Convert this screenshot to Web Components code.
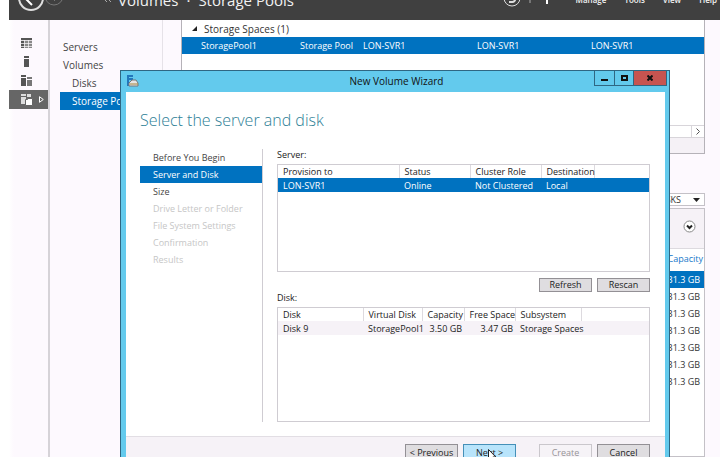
<!DOCTYPE html>
<html lang="en">
<head>
<meta charset="utf-8">
<title>New Volume Wizard</title>
<style>
    body {
        margin: 0;
        background: #ffffff;
        font-family: "Open Sans", "Noto Sans", sans-serif;
        font-size: 9px;
        color: #333333;
    }
</style>
</head>
<body>

<server-manager>
    <console-header slot="header"></console-header>

    <rail-button slot="rail" label="Dashboard">
        <svg width="13" height="12" viewBox="0 0 13 12"><path fill="#888" d="M1 1h11v10H1z"/><path fill="#555" d="M1 1h11v2H1zM1 4h3v7H1z"/><path stroke="#fdf9fe" d="M1 3.500h11M4.500 3v8M8.500 3v8M1 6.500h11M1 9.500h11" stroke-opacity=".7"/></svg>
    </rail-button>
    <rail-button slot="rail" label="Local server">
        <svg width="13" height="12" viewBox="0 0 13 12"><path fill="#555" d="M4 0h5v2H4zM4 3h5v8H4z"/></svg>
    </rail-button>
    <rail-button slot="rail" label="All servers">
        <svg width="13" height="12" viewBox="0 0 13 12"><path fill="#555" d="M1 0h5v2H1zM1 3h5v8H1z"/><path fill="#777" d="M7 2h5v2H7zM7 5h5v6H7z"/></svg>
    </rail-button>
    <rail-button slot="rail" label="File and storage services" selected>
        <svg width="13" height="12" viewBox="0 0 13 12"><path fill="#ddd" d="M1 0h5v2H1zM1 3h5v7H1zM7 0h4v3H7z"/><path fill="#fff" stroke="#666" d="M5.500 5.500h2v-1h5v7h-7z"/></svg>
    </rail-button>

    <nav-item slot="nav">Servers</nav-item>
    <nav-item slot="nav">Volumes</nav-item>
    <nav-item slot="nav" sub>Disks</nav-item>
    <nav-item slot="nav" sub selected>Storage Pools</nav-item>

    <pool-list></pool-list>
    <disk-list></disk-list>
</server-manager>

<wizard-window caption="New Volume Wizard" heading="Select the server and disk">
    <wizard-step slot="steps">Before You Begin</wizard-step>
    <wizard-step slot="steps" selected>Server and Disk</wizard-step>
    <wizard-step slot="steps">Size</wizard-step>
    <wizard-step slot="steps" disabled>Drive Letter or Folder</wizard-step>
    <wizard-step slot="steps" disabled>File System Settings</wizard-step>
    <wizard-step slot="steps" disabled>Confirmation</wizard-step>
    <wizard-step slot="steps" disabled>Results</wizard-step>

    <data-grid caption="Server:" selected
        heads="Provision to|Status|Cluster Role|Destination"
        cells="LON-SVR1|Online|Not Clustered|Local"
        widths="121|71|71|53" style="--grid-height: 108px"></data-grid>
    <button-row>
        <push-button>Refresh</push-button>
        <push-button>Rescan</push-button>
    </button-row>
    <data-grid caption="Disk:"
        heads="Disk|Virtual Disk|Capacity|Free Space|Subsystem"
        cells="Disk 9|StoragePool1|3.50 GB|3.47 GB|Storage Spaces"
        widths="85|59|42|51|66" right="2|3" style="--grid-height: 115px"></data-grid>

    <button-row slot="footer">
        <push-button>&lt; Previous</push-button>
        <push-button hot>Next &gt;</push-button>
        <push-button disabled gap>Create</push-button>
        <push-button>Cancel</push-button>
    </button-row>
</wizard-window>

<script>
// small helper, every element gets its template cloned into an open root
function attach(el, html) {
    const template = document.createElement("template");
    template.innerHTML = html;
    el.attachShadow({mode: "open"}).appendChild(template.content.cloneNode(true));
    return el.shadowRoot;
}

// PAGE SHELL
class ServerManager extends HTMLElement {
    connectedCallback() {
        attach(this, `
<style>
    :host {
        display: grid;
        grid-template-columns: 39px 115px 1fr;
        grid-template-rows: 20px 1fr;
        height: 100vh;
        overflow: hidden;
        box-sizing: border-box;
        padding-left: 9px;
        background: linear-gradient(90deg, #ffffff 9px, #fdf9fe 14px);
    }
    header { grid-column: 1 / 4; min-width: 0; }
    .rail { padding-top: 13px; border-right: 2px solid #d6d3d8; margin-right: -2px; }
    nav { padding: 18px 0 0 12px; border-right: 1px solid #e6e2e8; }
    main {
        display: flex;
        flex-direction: column;
        gap: 39px;
        margin: 0 15px 0 18px;
        min-height: 0;
    }
</style>
<header><slot name="header"></slot></header>
<div class="rail"><slot name="rail"></slot></div>
<nav><slot name="nav"></slot></nav>
<main><slot></slot></main>`);
    }
}
customElements.define("server-manager", ServerManager);

// DARK TOP BAR
class ConsoleHeader extends HTMLElement {
    connectedCallback() {
        attach(this, `
<style>
    :host {
        display: flex;
        align-items: flex-end;
        box-sizing: border-box;
        height: 20px;
        padding-bottom: 10px;
        overflow: hidden;
        background: #404040;
        color: #f2f2f2;
        line-height: 20px;
        white-space: nowrap;
    }
    svg { flex: none; display: block; overflow: visible; }
    h1 {
        display: flex;
        gap: 8px;
        flex: 1;
        margin: 0;
        font-size: 15px;
        font-weight: 400;
    }
    .menu { display: flex; gap: 18px; padding: 0 3px 0 26px; font-size: 8px; font-weight: 600; }
    a { color: inherit; text-decoration: none; }
</style>
<svg width="109" height="20" viewBox="0 -10 109 20" fill="none">
    <circle cx="22" cy="-2" r="12" stroke="#dedede" stroke-width="2"/>
    <path d="M23 5l-7-7 7-7M16-2h12" stroke="#fff" stroke-width="2"/>
    <circle cx="45" cy="-4" r="9" stroke="#777"/>
    <path d="M45 1l5-5" stroke="#777"/>
    <path d="M98 2l-3-3M102 2l-3-3" stroke="#aaa"/>
</svg>
<h1><span>Volumes</span><span>·</span><span>Storage Pools</span></h1>
<svg width="48" height="20" viewBox="0 -10 48 20" fill="none">
    <circle cx="10" cy="-2" r="8" stroke="#ddd"/>
    <path d="M7 2h3a3 3 0 0 0 3-4" stroke="#ddd" stroke-width="2"/>
    <path d="M28-9v12" stroke="#aaa"/>
    <path d="M45-9v13" stroke="#fff" stroke-width="2"/>
</svg>
<div class="menu"><a href="#">Manage</a><a href="#">Tools</a><a href="#">View</a><a href="#">Help</a></div>`);
    }
}
customElements.define("console-header", ConsoleHeader);

// LEFT ICON RAIL
class RailButton extends HTMLElement {
    connectedCallback() {
        const root = attach(this, `
<style>
    :host { display: block; }
    button {
        display: flex;
        align-items: center;
        gap: 6px;
        width: 100%;
        height: 19px;
        padding: 0 3px 0 11px;
        border: 0;
        background: none;
    }
    :host([selected]) button { background: #666666; }
    .arrow { display: none; }
    :host([selected]) .arrow { display: block; }
</style>
<button><slot></slot><svg class="arrow" width="5" height="7" viewBox="0 0 5 7"><path d="M.5.7v5.600L4.300 3.500z" fill="none" stroke="#fff"/></svg></button>`);
        root.querySelector("button").setAttribute("aria-label", this.getAttribute("label"));
    }
}
customElements.define("rail-button", RailButton);

class NavItem extends HTMLElement {
    connectedCallback() {
        attach(this, `
<style>
    :host { display: block; }
    a {
        display: block;
        padding-left: 3px;
        font-size: 10px;
        line-height: 18px;
        color: #444444;
        text-decoration: none;
        white-space: nowrap;
    }
    :host([sub]) a { padding-left: 12px; }
    :host([selected]) a { background: #0072c0; color: #ffffff; }
</style>
<a href="#"><slot></slot></a>`);
    }
}
customElements.define("nav-item", NavItem);

// STORAGE POOLS TILE
class PoolList extends HTMLElement {
    connectedCallback() {
        attach(this, `
<style>
    :host {
        display: flex;
        flex-direction: column;
        flex: none;
        height: 133px;
        border: 1px solid #b5b2b8;
        border-top: 0;
        background: #ffffff;
    }
    .group { display: flex; align-items: center; gap: 7px; height: 17px; padding-left: 10px; font-size: 10px; }
    table { width: 100%; table-layout: fixed; border-collapse: collapse; background: #0072c0; color: #ffffff; }
    td { height: 17px; padding: 0; white-space: nowrap; }
    td:first-child { padding-left: 19px; }
    .scroll { display: flex; justify-content: flex-end; margin-top: auto; height: 11px; border: 1px solid #d8d5da; border-right: 0; }
    .scroll button { width: 13px; padding: 0; border: 0; border-left: 1px solid #d8d5da; background: #ffffff; }
    .scroll svg { display: block; margin: auto; }
    .foot { height: 15px; background: #f5f1f6; }
</style>
<div class="group"><svg width="5" height="5" viewBox="0 0 5 5"><path d="M5 0v5H0z" fill="#222"/></svg>Storage Spaces (1)</div>
<table>
    <colgroup><col style="width: 118px"><col style="width: 63px"><col style="width: 114px"><col style="width: 114px"><col></colgroup>
    <tr><td>StoragePool1</td><td>Storage Pool</td><td>LON-SVR1</td><td>LON-SVR1</td><td>LON-SVR1</td></tr>
</table>
<div class="scroll"><button aria-label="Scroll right"><svg width="4" height="7" viewBox="0 0 4 7"><path d="M.5.5l3 3-3 3" fill="none" stroke="#555"/></svg></button></div>
<div class="foot"></div>`);
    }
}
customElements.define("pool-list", PoolList);

// PHYSICAL DISKS TILE
class DiskList extends HTMLElement {
    connectedCallback() {
        const root = attach(this, `
<style>
    :host { display: flex; flex-direction: column; align-items: stretch; flex: 1; min-height: 0; }
    label { display: flex; align-self: flex-end; align-items: center; width: 55px; height: 11px; border: 1px solid #c4c1c7; background: #ffffff; margin-bottom: 2px; }
    select { appearance: none; flex: 1; min-width: 0; height: 11px; padding: 0 0 0 6px; border: 0; background: none; font: inherit; color: #333333; line-height: 11px; }
    label svg { margin-right: 4px; }
    .tile { flex: 1; min-height: 0; border: 1px solid #c4c1c7; background: #ffffff; }
    .bar { display: flex; justify-content: flex-end; align-items: center; box-sizing: border-box; height: 40px; padding: 0 8px 4px 0; border-bottom: 1px solid #dddadf; background: #f6f2f7; }
    .bar button { display: flex; padding: 0; border: 0; background: none; }
    table { width: 100%; border-collapse: collapse; }
    th { height: 18px; padding: 0 1px 4px 0; font-weight: 400; text-align: right; color: #1979ca; }
    td { height: 17px; padding: 0 4px 0 0; text-align: right; }
    .on td { background: #0072c0; color: #ffffff; }
</style>
<label><select aria-label="Tasks"><option>TASKS</option></select><svg width="7" height="4" viewBox="0 0 7 4"><path d="M0 0h7L3.500 4z" fill="#222"/></svg></label>
<div class="tile">
    <div class="bar"><button aria-label="Expand"><svg width="13" height="13" viewBox="0 0 13 13" fill="none"><circle cx="6.500" cy="6.500" r="5.500" stroke="#888" fill="#fff"/><path d="M4 5.500l2.500 2.500L9 5.500" stroke="#222" stroke-width="2"/></svg></button></div>
    <table><thead><tr><th>Capacity</th></tr></thead><tbody></tbody></table>
</div>`);
        root.querySelector("tbody").innerHTML = `<tr class="on"><td>31.3 GB</td></tr>` + `<tr><td>31.3 GB</td></tr>`.repeat(6);
    }
}
customElements.define("disk-list", DiskList);

// WIZARD, floats over the console
class WizardWindow extends HTMLElement {
    connectedCallback() {
        const root = attach(this, `
<style>
    :host {
        position: absolute;
        top: 70px;
        left: 120px;
        right: 50px;
        bottom: 0;
        overflow: hidden;
        display: flex;
        flex-direction: column;
        box-sizing: border-box;
        border: 1px solid #2f6783;
        border-bottom: 0;
        padding: 0 4px 0 5px;
        background: #63caed;
        color: #222222;
    }
    .title {
        display: grid;
        grid-template-columns: 73px 1fr 73px;
        flex: none;
        height: 21px;
        margin-right: -2px;
    }
    .title > svg { margin: 4px 0 0 1px; }
    h1 { margin: 0; font-size: 10px; line-height: 21px; font-weight: 400; text-align: center; color: #111111; }
    .controls { display: grid; grid-template-columns: 20px 19px 34px; height: 15px; }
    .controls button {
        display: flex;
        align-items: center;
        justify-content: center;
        padding: 0;
        border: 1px solid #2f6783;
        border-top: 0;
        border-right: 0;
        background: #63caed;
    }
    .controls .close { background: #c75450; border-right: 1px solid #2f6783; }
    .page { flex: none; padding: 16px 15px 14px 14px; background: #ffffff; }
    h2 { margin: 0; font-size: 16px; line-height: 24px; font-weight: 300; color: #2d8096; }
    .cols { display: grid; grid-template-columns: 123px 1fr; gap: 14px; margin-top: 17px; }
    .steps { border-right: 1px solid #cfccd2; }
    .pane { min-width: 0; }
    .pane ::slotted(button-row) { margin-top: 6px; }
    footer { flex: none; padding: 7px 15px 10px 0; border-top: 1px solid #e2dee4; background: #f6f2f7; }
</style>
<div class="title">
    <svg width="12" height="12" viewBox="0 0 12 12">
        <path d="M0 0h6v2H2v1h4v2H2v6H0z" fill="#2277bb"/>
        <path d="M3 7l2-2h4l2 3v3H2V8z" fill="#e5e5e5" stroke="#777"/>
        <path d="M3 9h8" stroke="#a4863c"/>
    </svg>
    <h1></h1>
    <div class="controls">
        <button aria-label="Minimize"><svg width="7" height="7" viewBox="0 0 7 7"><path d="M0 4h7v2H0z" fill="#111"/></svg></button>
        <button aria-label="Maximize"><svg width="7" height="6" viewBox="0 0 7 6"><path d="M1 1h5v4H1z" fill="none" stroke="#111" stroke-width="2"/></svg></button>
        <button class="close" aria-label="Close"><svg width="6" height="6" viewBox="0 0 6 6"><path d="M.5.5l5 5M5.500.5l-5 5" stroke="#111" stroke-width="2"/></svg></button>
    </div>
</div>
<div class="page">
    <h2></h2>
    <div class="cols">
        <div class="steps"><slot name="steps"></slot></div>
        <div class="pane"><slot></slot></div>
    </div>
</div>
<footer><slot name="footer"></slot></footer>`);
        root.querySelector("h1").innerText = this.getAttribute("caption");
        root.querySelector("h2").innerText = this.getAttribute("heading");
    }
}
customElements.define("wizard-window", WizardWindow);

class WizardStep extends HTMLElement {
    connectedCallback() {
        attach(this, `
<style>
    :host { display: block; padding-left: 13px; line-height: 17px; color: #444444; white-space: nowrap; }
    :host([selected]) { background: #0072c0; color: #ffffff; }
    :host([disabled]) { color: #c6c6c6; }
</style>
<slot></slot>`);
    }
}
customElements.define("wizard-step", WizardStep);

// LIST WITH HEADERS, cells are split on |
class DataGrid extends HTMLElement {
    connectedCallback() {
        const root = attach(this, `
<style>
    :host { display: block; }
    .label { height: 12px; line-height: 12px; margin-bottom: 3px; }
    .box { box-sizing: border-box; height: var(--grid-height); border: 1px solid #cfccd2; background: #ffffff; }
    table { width: 100%; table-layout: fixed; border-collapse: collapse; }
    th, td { box-sizing: border-box; height: 14px; padding: 0 0 0 5px; line-height: 13px; font-weight: 400; text-align: left; white-space: nowrap; }
    th { height: 13px; line-height: 12px; border-right: 1px solid #dddadf; }
    th:last-child { border-right: 0; }
    td { background: #f6f2f7; }
    td.right { padding: 0 2px 0 0; text-align: right; }
    :host([selected]) td { background: #0072c0; color: #ffffff; }
</style>
<div class="label" id="cap"></div>
<div class="box"><table aria-labelledby="cap"><colgroup></colgroup><thead><tr></tr></thead><tbody><tr></tr></tbody></table></div>`);
        const list = name => (this.getAttribute(name) || "").split("|");
        const right = list("right");
        root.querySelector(".label").innerText = this.getAttribute("caption");
        root.querySelector("colgroup").innerHTML = list("widths").map(w => `<col style="width: ${w}px">`).join("") + "<col>";
        root.querySelector("thead tr").innerHTML = list("heads").map(h => `<th>${h}</th>`).join("") + "<th></th>";
        root.querySelector("tbody tr").innerHTML = list("cells").map((c, i) =>
            `<td class="${right.includes(String(i)) ? "right" : ""}">${c}</td>`).join("") + "<td></td>";
    }
}
customElements.define("data-grid", DataGrid);

class ButtonRow extends HTMLElement {
    connectedCallback() {
        attach(this, `
<style>
    :host { display: flex; justify-content: flex-end; gap: 5px; }
</style>
<slot></slot>`);
    }
}
customElements.define("button-row", ButtonRow);

class PushButton extends HTMLElement {
    connectedCallback() {
        const root = attach(this, `
<style>
    :host { display: block; position: relative; }
    :host([gap]) { margin-left: 18px; }
    button {
        display: block;
        width: 53px;
        height: 14px;
        padding: 0;
        border: 1px solid #939095;
        background: #dfdde0;
        color: #222222;
        font: inherit;
        line-height: 12px;
    }
    .tall { height: 18px; }
    :host([hot]) button { background: #b8e4fb; border-color: #4590b8; }
    :host([disabled]) button { background: #f6f3f7; border-color: #cac7cc; color: #969398; }
    .cursor { display: none; position: absolute; left: 25px; top: 5px; }
    :host([hot]) .cursor { display: block; }
</style>
<button><slot></slot></button>
<svg class="cursor" width="9" height="14" viewBox="0 0 9 14"><path d="M.5.5v10l2.300-2 1.700 4 2-1-1.700-3.500h3z" fill="#fff" stroke="#222"/></svg>`);
        root.querySelector("button").disabled = this.hasAttribute("disabled");
        if (this.parentElement.slot === "footer") root.querySelector("button").className = "tall";
    }
}
customElements.define("push-button", PushButton);
</script>
</body>
</html>
